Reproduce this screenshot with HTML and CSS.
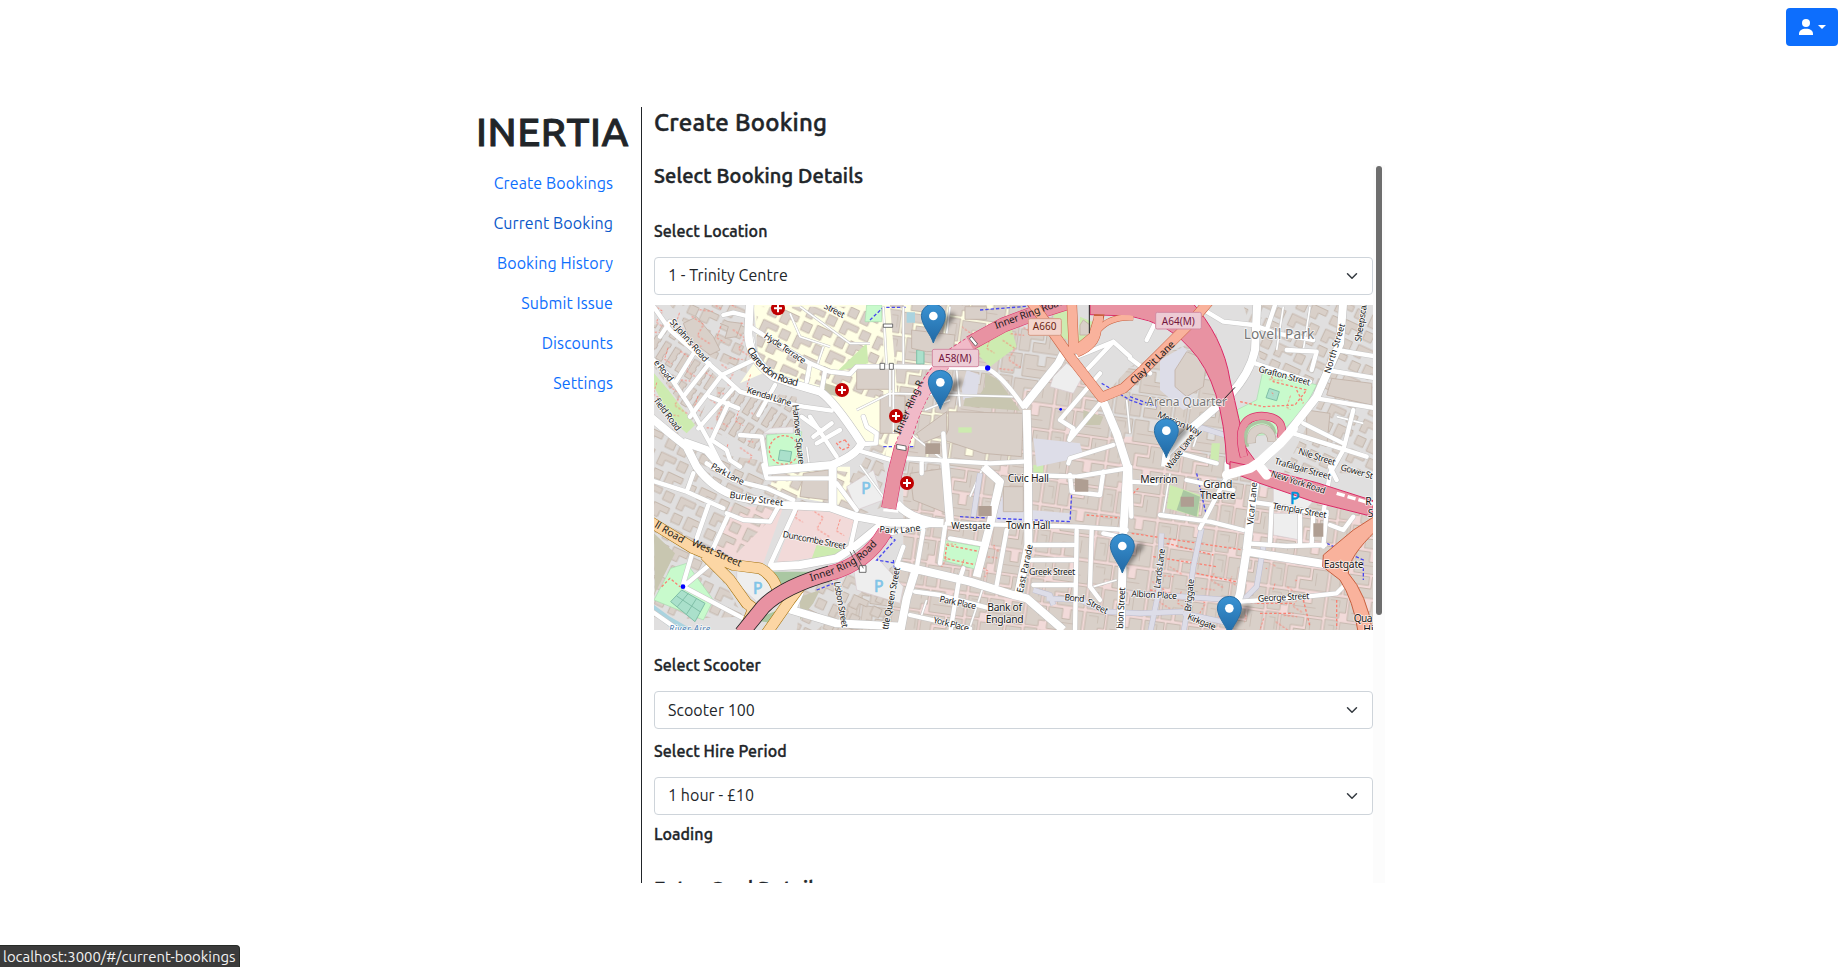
FILE: index.html
```html
<!DOCTYPE html>
<html lang="en">
<head>
<meta charset="utf-8">
<title>Inertia</title>
<link rel="stylesheet" href="styles.css">
</head>
<body>
<header class="topbar">
  <button class="user-button" aria-label="Account">
    <svg width="16" height="16" viewBox="0 0 16 16" fill="#fff"><circle cx="8" cy="4" r="4"/><path d="M1 16v-1.2C1 11.700 3.700 9.700 8 9.700s7 2 7 5.100V16z"/></svg>
    <span class="caret"></span>
  </button>
</header>
<main class="page">
  <aside class="sidebar">
    <h1 class="brand">INERTIA</h1>
    <nav class="menu">
      <a>Create Bookings</a><a class="active">Current Booking</a><a>Booking History</a><a>Submit Issue</a><a>Discounts</a><a>Settings</a>
    </nav>
  </aside>
  <section class="content">
    <h2 class="title">Create Booking</h2>
    <div class="scroller">
      <div class="form">
        <h3 class="subtitle">Select Booking Details</h3>
        <h4 class="label first">Select Location</h4>
        <div class="select raised"><span>1 - Trinity Centre</span><svg class="chev" viewBox="0 0 16 16"><path d="m2 5 6 6 6-6"/></svg></div>
        <svg class="map" viewBox="12 15 2157 975" preserveAspectRatio="none">
          <defs>
            <linearGradient id="pinfill" x1="0" y1="0" x2="0" y2="1"><stop offset="0" stop-color="#3a93d3"/><stop offset="1" stop-color="#2169a5"/></linearGradient>
            <filter id="soft" x="-50%" y="-50%" width="200%" height="200%"><feGaussianBlur stdDeviation="7"/></filter>
            <g id="pin">
              <path d="M2 0L50 -60Q75 -82 60 -90Q40 -95 12 -48Z" fill="#000" opacity=".4" filter="url(#soft)"/>
              <path d="M0 0C-7 -25 -36 -55 -36 -82A36 35 0 0 1 36 -82C36 -55 7 -25 0 0Z" fill="url(#pinfill)" stroke="#2a70a5" stroke-width="3"/>
              <circle cy="-81" r="13" fill="#fff"/>
            </g>
            <g id="med"><circle r="21" fill="#bf0000"/><path d="M-12 0H12M0-12V12" stroke="#fff" stroke-width="6"/></g>
            <pattern id="terrace" width="34" height="76" patternUnits="userSpaceOnUse" patternTransform="rotate(32)">
              <path d="M4 3h20v12h-3v12h3v12h-3v12h3v12H4z" class="bld"/>
            </pattern>
            <pattern id="houses" width="110" height="98" patternUnits="userSpaceOnUse" patternTransform="rotate(25)">
              <path d="M4 6h50v18H24v20H4zM66 8h28v28H66zM6 58h28v28H6zM48 52h50v18H74v20H48z" class="bld"/>
            </pattern>
            <pattern id="blocks" width="178" height="148" patternUnits="userSpaceOnUse" patternTransform="rotate(8)">
              <path d="M3 4h58v44H42v18H3zM68 4h42v30h24V4h38v66H68zM3 74h38v68H3zM48 78h70v26H80v38H48zM126 78h46v64H90v-28h36z" class="bld"/>
              <path d="M12 14h28v20M78 46h70M14 90h18v36M138 90v38" fill="none" stroke="#c4b6ab" stroke-width="2"/>
            </pattern>
            <pattern id="paths" width="130" height="110" patternUnits="userSpaceOnUse" patternTransform="rotate(18)">
              <path d="M4 8L46 20L38 58L84 70M96 10V46L122 52M20 92L60 84" fill="none" stroke="#fa8072" stroke-width="3" stroke-dasharray="7 5"/>
            </pattern>
            <g id="wide">
              <path d="M300 0L295 100Q296 175 370 230Q440 256 510 275Q550 300 635 430Q620 465 545 495L350 512"/>
              <path d="M0 350L60 400L110 440L140 500Q190 570 270 592L400 615L540 622L620 650L720 668L880 670"/>
              <path d="M100 425L170 450L230 520"/>
              <path d="M548 495V620"/>
              <path d="M1130 330L1134 500L1135 735L1105 880M1120 320L1225 190L1245 150"/>
              <path d="M1358 300L1400 400L1432 500L1420 700L1412 1000"/>
              <path d="M885 480L900 670M1000 500L1050 545L1020 675L980 830"/>
              <path d="M1822 0L1815 150Q1800 220 1740 285L1630 380L1550 460L1545 500"/>
              <path d="M2080 0L2070 130L2000 290L1910 405L1820 500L1740 520"/>
              <path d="M1825 490L1805 620L1790 750L1770 880L1755 930M1790 755L2040 795M1730 520L1840 500"/>
              <path d="M360 800L450 795L560 775L620 735L700 670M450 875L425 930L560 970L760 980"/>
              <path d="M740 795L810 810L960 845L1090 885L1130 895L1240 990M795 815L770 895L750 1000"/>
              <path d="M740 610Q780 660 880 670"/>
            </g>
            <g id="mid">
              <path d="M0 5L60 90L215 225L270 275L360 300L460 320L545 332M215 225L315 178M0 170L60 230L120 320L180 430L225 520"/>
              <path d="M300 80L340 105L480 190L540 215L600 222L620 200L740 200L1010 205Q1055 225 1120 320"/>
              <path d="M140 145L78 245M178 190L100 290M215 225L120 350M250 265L145 385M375 255L325 345M480 190L470 245M525 215L515 270M220 45L250 38L290 48M60 65L30 110M270 405L335 410L350 510M235 310L185 420L230 450L240 480L270 500M180 290L265 325"/>
              <path d="M480 350L560 470M510 390L455 350M545 370L490 410M570 390L500 430M640 350L650 380L680 400L678 430L640 432"/>
              <path d="M170 490L250 540L350 565L430 600M175 615L140 715L100 850M235 645L180 765M440 620L360 795M190 785L100 860L280 955M620 655L600 745M230 640L280 660L360 665L385 620M0 540L110 575L220 625M340 495L350 535L550 535M560 550L620 630M550 500L620 450L740 485M110 575L130 520M0 930L100 1000"/>
              <path d="M770 475L1020 490L1120 485M880 400L885 480M815 480V520M1350 220L1230 360L1270 385L1258 420L1350 310M1255 490L1260 475L1390 435M1280 170L1390 125L1440 170M1390 125L1310 210"/>
              <path d="M1440 175L1500 220M1670 35L1720 65L1810 75L1880 100L1990 120M1800 185L1980 245M2060 150L2180 170M2030 210L2180 235M2000 295L2180 325M1960 370L2080 430M1930 400L2150 470M2110 330L2080 450L2040 520L2020 640M1910 150L2000 155L1985 210M1590 460L1700 490M1850 90L1880 0M1520 60L1490 120"/>
              <path d="M720 700L870 668M820 690L800 805M760 740L740 795M900 715L1010 735M885 680L870 790M1070 690L1040 855M940 805L925 850L900 1000M795 875L870 885L1020 925M780 945L960 985M1140 525L1280 530L1430 505M1260 525L1265 575L1350 585L1360 515M890 670L1280 680L1430 690M1280 690L1275 1000M1140 735H1270M1140 780H1270M1150 855H1270M1325 690L1320 860L1350 900M1360 700L1410 710"/>
              <path d="M1530 645L1680 665L1780 690M1730 490L1730 530L1650 685M1440 545L1520 550M1800 605L1870 615L2030 645M1865 615L1860 725M1950 645V730M2030 635L2020 740M1790 730L1910 738L2025 735M1770 905L1920 895L2060 880L2090 850M1440 500L1444 650M1610 540L1750 570M1990 645L1985 730M2040 675L2080 690L2110 650M2040 500L2060 540"/>
            </g>
            <g id="lane">
              <path d="M310 110L320 190M420 40L450 110L540 140M450 20L600 130L660 130M520 140L500 200M700 20L710 200M730 200V400M760 20V200M900 20L890 100M620 330L720 280L1090 290M920 210L930 320M780 330V400L880 480M1430 300L1440 400M1660 350L1630 440M1630 120L1700 210M1900 20L1880 150M1980 20L1960 150M720 210V320M825 330L900 300M960 590L1000 500M1330 860L1400 840M1560 520L1540 640M630 495L700 590M470 440L480 510M830 900L810 960M1000 860L960 980M2060 350L2140 370"/>
            </g>
            <g id="lilac">
              <path d="M1655 685L1630 800L1612 930L1600 1000M1535 700L1525 880L1500 1000M1440 880L1600 890L1740 900M1150 870L1200 885L1210 915M1190 895L1290 900L1370 935L1470 940L1600 935M1600 940L1740 970M1840 740L1820 860L1780 900M1645 380L1740 410M990 520L970 650"/>
            </g>
            <path id="clarendon" d="M290 148Q318 205 372 236Q405 252 470 265"/>
            <path id="ringroad" d="M483 844L545 824Q600 804 640 775L700 715"/>
          </defs>

          <!-- land use -->
          <path class="land" d="M0 0H2200V1000H0z"/>
          <path class="yellow" d="M310 0H1160L1030 80L830 300L740 490L640 425L570 330L500 270L350 215L270 250L325 170zM380 500H600V620L430 590L360 560zM760 330L1110 300L1120 480H790z"/>
          <path class="commerce" d="M240 620L400 620L340 790L180 770zM440 620L620 650L580 760L380 790zM760 520L1130 480L2169 600V990H720L760 800zM1240 410H1560L1700 480L1700 900H1240zM1010 320L1300 200L1380 450L1150 500z"/>
          <path d="M12 75L60 60L95 130L200 230L140 380L12 200zM200 260L440 290V500L200 400z" fill="url(#terrace)"/>
          <path d="M12 350L180 460L620 520L740 300L700 495L730 610L620 650L420 600L220 800L12 640zM60 15H290V220L180 170zM320 20H700V300L520 260L320 190zM1780 15H2169V520H1900L2020 280L1850 240z" fill="url(#houses)"/>
          <path d="M720 15H1200L1350 300L1440 200L1700 100L1760 480L1850 540L2169 640V990H500L760 770V500z" fill="url(#blocks)"/>
          <path d="M190 785L280 950L12 960V620zM460 850L740 800L720 990H440z" fill="url(#houses)"/>
          <path class="park" d="M350 405L455 395L452 495L352 500zM1840 205L2000 255L1960 330L1890 400L1780 410L1760 330L1820 300zM885 722L1000 742L985 810L875 780zM62 805L110 790L190 900L160 960L12 900zM650 15H695V65H645z"/>
          <path class="grass" d="M12 220L55 270L135 375L110 400L65 360L12 260zM650 130L655 190L560 215zM960 140L1080 70L1100 140L1020 200zM1290 50L1350 75L1320 160L1280 170zM1200 15L1260 15L1280 130L1230 110zM500 735L590 750L480 790zM1560 555L1650 585L1645 650L1550 625zM1150 495H1180V520H1150zM1685 430L1710 430L1705 490H1680z"/>
          <path class="lawn" d="M370 815L490 815L410 860L360 870zM1600 570L1650 590L1640 650L1580 630zM310 960L410 920L370 970z"/>
          <path class="scrub" d="M12 700L75 760L15 880zM525 250L580 265L565 290L525 280zM1300 330L1360 350L1350 375H1300zM450 890L510 870L490 910L450 960zM165 440L195 480L170 470z"/>
          <path class="plaza" d="M950 210L990 225L980 290L940 300L935 265zM1150 415L1290 430L1300 470L1160 500zM1530 180L1600 140L1620 160L1580 220L1640 310L1600 330L1530 270zM1060 580L1140 630L1260 640V665H1030z"/>
          <path class="parking" d="M590 560L670 510L700 600L620 630zM610 800L670 760L760 860L750 910L620 870zM260 805L340 800L370 865L320 905L260 850zM1870 520L2000 590L1960 640L1870 610zM1870 640H1950V720L1870 705zM1210 230L1250 190L1300 225L1270 280L1200 260zM430 380L360 385L340 400H430z"/>
          <path class="water" d="M12 915L60 950L130 990H70L12 945zM770 37H795V68H770z"/>
          <path class="pitch" d="M390 450L425 455L420 485L385 480zM95 870L165 910L135 965L62 905zM80 888L150 935M115 880L82 920M140 895L108 945M1858 265L1888 275L1880 302L1848 293zM800 150H822V192H800z"/>
          <path class="bld" d="M785 90L915 105L910 150L830 155L785 145zM620 205H732V268H620zM690 285L765 288V400H690zM895 335L1120 340L1115 470L1000 460L880 420L895 390zM1575 210L1610 155L1670 180L1660 260L1610 290L1575 260zM945 20H1010V58H945zM460 520L535 510V600L450 590zM800 400L890 335L890 400L815 430zM1060 560H1120V635H1060zM100 70L140 50L190 110L210 150L180 165L120 120zM210 70L235 80L225 115L260 110L275 70L235 65M780 520L885 505L890 640L790 600zM1290 75L1300 60L1320 75V105H1290zM2045 235L2165 250V315L2030 285zM1970 330L2040 340L2030 440L1970 420z"/>
          <path class="scrub" d="M1005 218L1045 240L1110 332L940 318L945 295L985 290L1005 260z"/>
          <path class="grass" d="M925 382H965V398H925z"/>
          <path d="M12 15H310V500L12 310zM440 620L610 660L580 740L420 710zM930 70L1180 80L1080 260L1000 200zM1500 790L1760 830V970H1520zM1790 890L1960 900V990H1780zM1830 210L1990 260L1900 350zM870 700L1060 740L1040 840L870 800zM1850 790L1950 800L1930 890L1830 860z" fill="url(#paths)" opacity=".85"/>
          <g class="redpath"><ellipse cx="402" cy="450" rx="44" ry="43"/><path d="M890 735L990 755L980 795L885 775zM1860 215L1870 245L1970 270L1935 315L1840 320L1770 305M1940 270L1960 310M1500 870L1690 900M1510 770L1700 800M1640 820L1780 850M1550 730L1690 765M1310 645L1420 655M1820 910H1930M1830 940H1930M1960 900L1980 980M2060 900V985M1445 700L1780 750M1155 20L1160 60M1440 590L1470 560M35 860L60 835L90 860M585 420L600 440L575 450L560 430z"/></g>
          <g class="bluepath"><path d="M660 60L700 22H770M990 30L1180 15M930 650L1260 665L1265 580M1440 290L1520 320M700 440H790M705 700L735 720L680 780L740 790M1640 520L1670 650M2030 730L2140 780V840M730 780L740 850M1355 250L1440 300L1480 315M500 870L550 850"/></g>

          <!-- streets -->
          <use href="#lane" class="lane-case"/><use href="#lane" class="lane-fill"/>
          <use href="#lilac" class="lilac-case"/><use href="#lilac" class="lilac-fill"/>
          <use href="#mid" class="mid-case"/><use href="#wide" class="wide-case"/>
          <use href="#mid" class="mid-fill"/><use href="#wide" class="wide-fill"/>

          <g class="road tan-case"><path d="M0 665L130 745L250 795L330 805Q375 830 385 880M165 765L240 840L290 910L310 925L280 1000M350 1000L420 900L450 860"/></g>
          <g class="road tan"><path d="M0 665L130 745L250 795L330 805Q375 830 385 880M165 765L240 840L290 910L310 925L280 1000M350 1000L420 900L450 860"/></g>
          <g class="road pink-case"><path d="M716 625L735 520L755 440M960 130L1060 75L1180 30L1260 5M705 695Q650 790 540 820"/><path class="bridge" d="M540 820Q400 860 340 920L275 1000"/></g>
          <path class="tunnel-case" d="M755 440L790 340Q830 240 900 170L962 130"/>
          <path class="tunnel" d="M755 440L790 340Q830 240 900 170L962 130"/>
          <g class="road pink"><path d="M716 625L735 520L755 440M960 130L1060 75L1180 30L1260 5M705 695Q650 790 540 820Q400 860 340 920L275 1000"/></g>
          <path class="junction" d="M1320 0H1620Q1720 110 1740 240Q1770 370 1785 440L1825 495L1760 500L1730 490Q1720 250 1620 145Q1560 70 1440 48L1320 44z"/>
          <path d="M1782 470Q1750 350 1835 348Q1910 350 1892 415" fill="none" stroke="#dc2a67" stroke-width="25"/>
          <path d="M1782 470Q1750 350 1835 348Q1910 350 1892 415" fill="none" stroke="#e892a2" stroke-width="21"/>
          <path d="M1793 440Q1770 372 1837 365Q1870 368 1874 400" fill="none" stroke="#aac7a2" stroke-width="10"/>
          <path d="M1804 430Q1800 390 1836 386Q1865 390 1866 425" fill="none" stroke="#b8aa9e" stroke-width="27"/>
          <path d="M1804 429Q1800 390 1836 386Q1865 390 1866 424" fill="none" stroke="#d9d0c9" stroke-width="23"/>
          <path class="junction" d="M1740 485L1835 505L2000 548L2169 602V650L1990 605L1830 550L1740 515z"/>
          <path d="M1930 385L1890 430L1830 485L1800 505L1730 525M1822 490L1850 525" fill="none" stroke="#fff" stroke-width="28" stroke-linejoin="round" stroke-linecap="round"/>
          <path d="M2060 580L2169 612" stroke="#fff" stroke-width="10" stroke-dasharray="25 9"/>
          <g class="road orange-case"><path d="M1140 0L1260 170L1355 292L1420 265L1480 210L1560 130L1620 70L1680 0M1265 0L1272 160M1355 0L1345 60L1330 110L1275 155"/><path class="ramp" d="M1450 52Q1380 48 1345 90Q1340 140 1282 162"/></g>
          <g class="road orange"><path d="M1140 0L1260 170L1355 292L1420 265L1480 210L1560 130L1620 70L1680 0M1265 0L1272 160M1345 48L1345 60L1330 110L1275 155"/><path class="ramp" d="M1450 52Q1380 48 1345 90Q1340 140 1282 162"/></g>
          <path d="M1330 0H1500L1590 60L1500 62L1440 46L1330 42z" fill="#e892a2"/>
          <path class="amber" d="M2180 645L2110 690L2020 765L2018 800L2070 840Q2110 900 2125 1000H2169Q2150 880 2095 820Q2095 770 2180 690z"/>
          <path d="M1318 15V100M1705 315L1755 262" fill="none" stroke="#222" stroke-width="3"/>
          <path d="M700 630L745 634" stroke="#fff" stroke-width="8"/>
          <path class="gate" d="M740 433l28 5v14l-28-5zM965 110l18 22-7 6-18-22zM700 72h28v10h-28zM690 190h14v18h-14zM718 190h12v18h-12zM600 755l28 55M610 750l30 55M628 797h20v20h-20z"/>
          <path fill="#af9e92" d="M826 430h44v32h-44zM985 618h40v30h-40zM1275 535l40 5v35h-40zM1592 590h40v30h-40zM1990 670h30v40h-30z"/>
          <circle cx="1013" cy="204" r="8" class="stop"/><circle cx="99" cy="860" r="7" class="stop"/><circle cx="1232" cy="328" r="4" class="stop"/>
          <use href="#med" x="384" y="25"/><use href="#med" x="576" y="270"/><use href="#med" x="738" y="348"/><use href="#med" x="771" y="549"/>

          <!-- street names -->
          <g class="names">
            <text transform="translate(58 67) rotate(49)" textLength="160">St John's Road</text>
            <text transform="translate(10 188) rotate(51)" textLength="76">e Road</text>
            <text transform="translate(10 302) rotate(53)" textLength="115">field Road</text>
            <text transform="translate(340 112) rotate(34)" textLength="144">Hyde Terrace</text>
            <text transform="translate(520 24) rotate(28)" textLength="66">Street</text>
            <text class="big"><textPath href="#clarendon" textLength="196">Clarendon Road</textPath></text>
            <text transform="translate(289 278) rotate(17)" textLength="138">Kendal Lane</text>
            <text transform="translate(427 315) rotate(84)" textLength="180">Hanover Square</text>
            <text transform="translate(181 505) rotate(28)" textLength="108">Park Lane</text>
            <text transform="translate(238 593) rotate(9)" textLength="162">Burley Street</text>
            <text transform="translate(397 711) rotate(11)" textLength="192">Duncombe Street</text>
            <text transform="translate(12 680) rotate(31)" class="big" textLength="98">ll Road</text>
            <text transform="translate(123 735) rotate(24)" class="big" textLength="160">West Street</text>
            <text class="big"><textPath href="#ringroad" textLength="232">Inner Ring Road</textPath></text>
            <text transform="translate(552 846) rotate(80)" textLength="140">Lisbon Street</text>
            <text transform="translate(714 990) rotate(-79)" textLength="190">ttle Queen Street</text>
            <text x="688" y="697" transform="rotate(4 688 697)">Park</text><text x="752" y="700" transform="rotate(-8 752 700)">Lane</text>
            <text transform="translate(750 405) rotate(-66)" class="big" textLength="174">Inner Ring R</text>
            <text transform="translate(1038 87) rotate(-20)" class="big" textLength="220">Inner Ring Road</text>
            <text transform="translate(1452 255) rotate(-44)" class="big" textLength="172">Clay Pit Lane</text>
            <text transform="translate(1520 350) rotate(24)" textLength="142">Merrion Way</text>
            <text transform="translate(1560 510) rotate(-53)" textLength="125">Wade Lane</text>
            <text transform="translate(1824 215) rotate(15)" textLength="160">Grafton Street</text>
            <text transform="translate(2040 222) rotate(-73)" textLength="155">North Street</text>
            <text transform="translate(2133 126) rotate(-81)" textLength="120">Sheepscar</text>
            <text transform="translate(1943 461) rotate(18)" textLength="116">Nile Street</text>
            <text transform="translate(1872 491) rotate(16)" textLength="174">Trafalgar Street</text>
            <text transform="translate(1861 529) rotate(18)" textLength="170">New York Road</text>
            <text transform="translate(2070 510) rotate(16)" textLength="100">Gower St</text>
            <text transform="translate(1867 626) rotate(10)" textLength="163">Templar Street</text>
            <text transform="translate(1810 675) rotate(-85)" textLength="128">Vicar Lane</text>
            <text transform="translate(1530 866) rotate(-83)" textLength="120">Lands Lane</text>
            <text transform="translate(1622 935) rotate(-84)" textLength="98">Briggate</text>
            <text transform="translate(1444 890) rotate(3)" textLength="137">Albion Place</text>
            <text transform="translate(1610 957) rotate(22)" textLength="90">Kirkgate</text>
            <text transform="translate(1824 905) rotate(-3)" textLength="155">George Street</text>
            <text x="1137" y="825" textLength="139">Greek Street</text>
            <text transform="translate(1243 901) rotate(5)" textLength="60">Bond</text><text transform="translate(1308 911) rotate(28)" textLength="68">Street</text>
            <text transform="translate(1419 987) rotate(-87)" textLength="125">bion Street</text>
            <text transform="translate(1118 880) rotate(-78)" textLength="148">East Parade</text>
            <text transform="translate(867 905) rotate(12)" textLength="112">Park Place</text>
            <text transform="translate(848 968) rotate(14)" textLength="110">York Place</text>
            <text x="904" y="686" textLength="118">Westgate</text>
            <g class="place">
              <text x="1073" y="547" textLength="124">Civic Hall</text><text x="1068" y="686" textLength="133">Town Hall</text>
              <text x="1012" y="933" textLength="104">Bank of</text><text x="1007" y="969" textLength="114">England</text>
              <text x="1471" y="548" textLength="112">Merrion</text><text x="1660" y="563" textLength="87">Grand</text><text x="1650" y="598" textLength="107">Theatre</text>
              <text x="2021" y="805" textLength="120">Eastgate</text><text x="2111" y="966" textLength="57">Qua</text><text x="2140" y="999">Hi</text><text x="2146" y="616">R</text><text x="2153" y="650">S</text>
            </g>
            <g class="district"><text x="1781" y="117" textLength="212" class="lovell">Lovell Park</text><text x="1489" y="317" textLength="242">Arena Quarter</text></g>
            <text x="57" y="997" class="river" textLength="124">River Aire</text>
            <g class="p"><text x="634" y="583">P</text><text x="309" y="881">P</text><text x="672" y="876">P</text><text x="1920" y="613" class="public">P</text></g>
          </g>
          <g class="shield">
            <rect x="847" y="148" width="139" height="52" rx="5" class="rose"/><text x="915" y="186" textLength="99" class="rosetext">A58(M)</text>
            <rect x="1135" y="56" width="99" height="50" rx="5" class="peach"/><text x="1184" y="91" textLength="71" class="peachtext">A660</text>
            <rect x="1517" y="37" width="137" height="50" rx="5" class="rose"/><text x="1585" y="75" textLength="99" class="rosetext">A64(M)</text>
          </g>
          <use href="#pin" x="850" y="129"/><use href="#pin" x="871" y="328"/><use href="#pin" x="1549" y="473"/><use href="#pin" x="1417" y="819"/><use href="#pin" x="1738" y="1006"/>
        </svg>
        <h4 class="label">Select Scooter</h4>
        <div class="select"><span>Scooter 100</span><svg class="chev" viewBox="0 0 16 16"><path d="m2 5 6 6 6-6"/></svg></div>
        <h4 class="label hire">Select Hire Period</h4>
        <div class="select raised"><span>1 hour - £10</span><svg class="chev" viewBox="0 0 16 16"><path d="m2 5 6 6 6-6"/></svg></div>
        <h4 class="label loading">Loading</h4>
        <h3 class="subtitle card">Enter Card Details</h3>
      </div>
      <div class="track"><div class="thumb"></div></div>
    </div>
  </section>
</main>
<div class="status">localhost:3000/#/current-bookings</div>
</body>
</html>
```
FILE: styles.css
```css
* { box-sizing: border-box; }
body { margin: 0; height: 967px; overflow: hidden; background: #fff; color: #212529; font: 400 16px/24px Ubuntu, "Noto Sans", sans-serif; }
h1, h2, h3, h4 { margin: 0; font-weight: 500; white-space: nowrap; -webkit-text-stroke: .35px #212529; }
.topbar { height: 107px; padding: 8px 9px 0; display: flex; justify-content: flex-end; align-items: flex-start; }
.user-button { width: 52px; height: 38px; padding: 0; border: 0; border-radius: 4px; background: #0d6efd; display: flex; align-items: center; justify-content: center; gap: 4px; }
.caret { border: 4px solid transparent; border-top-color: #fff; border-bottom: 0; margin-bottom: 1px; }
.page { display: flex; height: 776px; padding-left: 465px; }
.sidebar { width: 177px; border-right: 1px solid #212529; }
.brand { font-size: 40px; line-height: 49px; height: 48px; letter-spacing: .5px; text-align: right; padding-right: 12px; -webkit-text-stroke-width: .9px; }
.menu { display: flex; flex-direction: column; align-items: flex-end; gap: 16px; padding: 16px 28px 0 0; }
.menu a { color: #0d6efd; white-space: nowrap; letter-spacing: .1px; }
.menu .active { color: #0a58ca; }
.content { width: 743px; padding-left: 12px; }
.title { font-size: 24px; line-height: 32px; height: 58px; letter-spacing: .25px; -webkit-text-stroke-width: .5px; }
.scroller { height: 718px; display: flex; overflow: hidden; }
.form { width: 719px; height: 718px; overflow: hidden; }
.subtitle { font-size: 20px; line-height: 22px; height: 24px; letter-spacing: .17px; -webkit-text-stroke-width: .5px; }
.label { font-size: 16px; line-height: 20px; margin: 25px 0 16px; letter-spacing: .08px; }
.label.first { margin: 32px 0 16px; }
.label.hire { margin-top: 12px; }
.label.loading { margin: 9px 0 0; }
.card { margin-top: 34px; }
.select { height: 38px; border: 1px solid #ced4da; border-radius: 4px; padding: 0 12px 0 13px; display: flex; align-items: center; justify-content: space-between; letter-spacing: .05px; }
.raised span { padding-bottom: 2px; }
.chev { width: 16px; height: 12px; fill: none; stroke: #343a40; stroke-width: 2; stroke-linecap: round; stroke-linejoin: round; }
.track { width: 12px; background: #fcfcfc; padding: 1px 3px; }
.thumb { width: 6px; height: 449px; border-radius: 3px; background: #6e6e6e; }
.status { position: absolute; left: 0; bottom: 0; width: 240px; height: 22px; padding-left: 3px; background: #3b3b3b; border: 1px solid #272b27; border-width: 1px 1px 0 0; border-radius: 0 4px 0 0; color: #f2f2f2; font-size: 14.900px; line-height: 22px; white-space: nowrap; }

.map { display: block; width: 719px; height: 325px; margin-top: 10px; overflow: hidden; }
.land { fill: #e0dfdf; }
.yellow { fill: #ffffe5; }
.commerce { fill: #f2dad9; }
.park { fill: #c8facc; stroke: #a9dbb0; stroke-width: 2; }
.grass { fill: #cdebb0; }
.lawn { fill: #aac7a2; }
.scrub { fill: #c8c6b0; }
.plaza { fill: #dddde8; }
.parking { fill: #eee; stroke: #d8cbd0; stroke-width: 2; }
.water { fill: #aad3df; }
.pitch { fill: #aae0cb; stroke: #80bfa7; stroke-width: 3; }
.bld { fill: #d9d0c9; stroke: #c0b1a6; stroke-width: 2.500; }
.redpath { fill: none; stroke: #fa8072; stroke-width: 4; stroke-dasharray: 8 6; }
.bluepath { fill: none; stroke: #4848ee; stroke-width: 4; stroke-dasharray: 10 6; }
use, .road { stroke-linejoin: round; }
.lane-case, .lane-fill, .mid-case, .mid-fill, .wide-case, .wide-fill, .lilac-case, .lilac-fill, .road, .tunnel, .tunnel-case { fill: none; }
.lane-case { stroke: #c4c4c4; stroke-width: 8; }
.lane-fill { stroke: #fff; stroke-width: 5; }
.mid-case { stroke: #c6c6c6; stroke-width: 16; stroke-linecap: round; }
.mid-fill { stroke: #fff; stroke-width: 13; stroke-linecap: round; }
.wide-case { stroke: #c0c0c0; stroke-width: 27; }
.wide-fill { stroke: #fff; stroke-width: 24; }
.lilac-case { stroke: #bebed0; stroke-width: 17; }
.lilac-fill { stroke: #dddde8; stroke-width: 14; }
.tan-case { stroke: #a06b00; stroke-width: 34; }
.tan { stroke: #fcd6a4; stroke-width: 31; }
.pink-case { stroke: #dc2a67; stroke-width: 45; }
.pink { stroke: #e892a2; stroke-width: 42; }
.bridge { stroke: #222; stroke-width: 47; }
.tunnel-case { stroke: #dc2a67; stroke-width: 42; stroke-dasharray: 10 6; }
.tunnel { stroke: #f1bac8; stroke-width: 38; }
.junction { fill: #e892a2; stroke: #dc2a67; stroke-width: 3; }
.orange-case { stroke: #c8603f; stroke-width: 31; }
.orange { stroke: #f9b29c; stroke-width: 28; }
.orange-case .ramp { stroke-width: 19; }
.orange .ramp { stroke-width: 16; }
.amber { fill: #f9b29c; stroke: #c8603f; stroke-width: 3; }
.gate { fill: #fff; stroke: #555; stroke-width: 2.500; }
.stop { fill: #00f; }
.names { font: 27px "Noto Sans", sans-serif; fill: #1a1a1a; stroke: #fff; stroke-opacity: .75; stroke-width: 5; paint-order: stroke; stroke-linejoin: round; }
.names .big { font-size: 30px; stroke: none; }
.names .place { font-size: 31px; }
.district { font-size: 36px; fill: #777; }
.lovell { font-size: 41px; }
.river { fill: #4d80b3; font-style: italic; }
.p { font-size: 47px; fill: #81c4e7; stroke: #81c4e7; stroke-opacity: 1; stroke-width: 2; }
.public { fill: #0092da; stroke: #0092da; }
.shield { font: 30px "Noto Sans", sans-serif; text-anchor: middle; stroke-width: 3; }
.shield text { stroke: none; }
.rose { fill: #edccd5; stroke: #d38ba3; }
.rosetext { fill: #73163d; }
.peach { fill: #f4d5cc; stroke: #d69a86; }
.peachtext { fill: #6b2614; }
```
